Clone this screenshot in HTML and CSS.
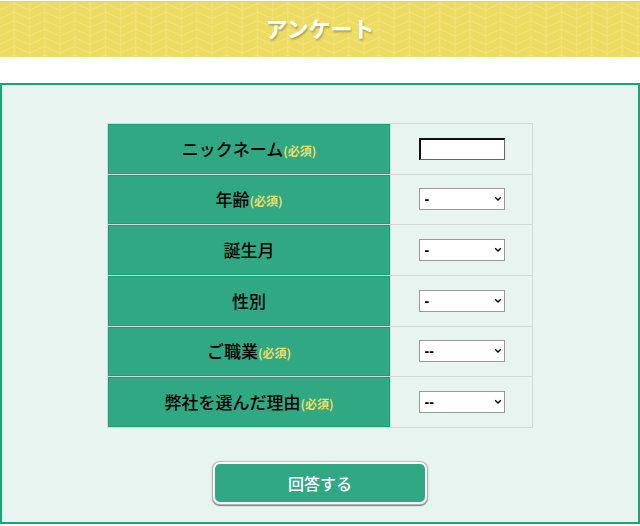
FILE: index.html
```html
<!DOCTYPE html>
<html lang="ja">
<head>
<meta charset="utf-8">
<meta name="viewport" content="width=device-width, initial-scale=1">
<title>アンケート</title>
<link rel="stylesheet" href="styles.css">
</head>
<body>
<header class="banner">
  <svg class="banner-pattern" aria-hidden="true">
    <defs>
      <path id="zigzag" d="M0 6.8 15.2 0 30.4 6.8 45.6 0 60.8 6.8 76 0 91.2 6.8 106.4 0 121.6 6.8 136.8 0 152 6.8"/>
      <pattern id="chevron" width="152" height="43" x="-1" y="1" patternUnits="userSpaceOnUse">
        <path class="upright" d="M0 0V43M15.2 0V43M30.4 0V43M45.6 0V43M60.8 0V43M76 0V43M91.2 0V43M106.4 0V43M121.6 0V43M136.8 0V43M152 0V43"/>
        <use href="#zigzag" y="-8.2"/>
        <use href="#zigzag" y="0.4"/>
        <use href="#zigzag" y="9"/>
        <use href="#zigzag" y="17.6"/>
        <use href="#zigzag" y="26.2"/>
        <use href="#zigzag" y="34.8"/>
        <use href="#zigzag" y="43.4"/>
      </pattern>
    </defs>
    <rect width="100%" height="100%" fill="url(#chevron)"/>
  </svg>
  <h1 class="banner-title">アンケート</h1>
</header>
<main class="panel">
  <form class="survey">
    <table class="fields">
      <tr>
        <th scope="row"><label for="nickname">ニックネーム<span class="required">(必須)</span></label></th>
        <td><input class="control text" id="nickname" type="text" required></td>
      </tr>
      <tr>
        <th scope="row"><label for="age">年齢<span class="required">(必須)</span></label></th>
        <td><select class="control choice" id="age"><option>-</option></select></td>
      </tr>
      <tr>
        <th scope="row"><label for="month">誕生月</label></th>
        <td><select class="control choice" id="month"><option>-</option></select></td>
      </tr>
      <tr>
        <th scope="row"><label for="gender">性別</label></th>
        <td><select class="control choice" id="gender"><option>-</option></select></td>
      </tr>
      <tr>
        <th scope="row"><label for="job">ご職業<span class="required">(必須)</span></label></th>
        <td><select class="control choice" id="job"><option>--</option></select></td>
      </tr>
      <tr>
        <th scope="row"><label for="reason">弊社を選んだ理由<span class="required">(必須)</span></label></th>
        <td><select class="control choice" id="reason"><option>--</option></select></td>
      </tr>
    </table>
    <button class="submit" type="submit">回答する</button>
  </form>
</main>
</body>
</html>
```
FILE: styles.css
```css
* {
  box-sizing: border-box;
}

body {
  margin: 0;
  background: #fff;
  color: #000;
  font-family: "Noto Sans CJK JP", sans-serif;
}

.banner {
  position: relative;
  margin-top: 1px;
  padding: 10px 12px 14px;
  background: #eddc62;
  border-top: 1px solid #e7d653;
}

.banner-pattern {
  position: absolute;
  inset: 0;
  width: 100%;
  height: 100%;
}

.banner-pattern path {
  fill: none;
  stroke: #f2e486;
  stroke-width: 1;
}

.banner-pattern .upright {
  stroke: #f0e27a;
}

.banner-title {
  position: relative;
  margin: 0;
  color: #fff;
  font-size: 22px;
  font-weight: 700;
  line-height: 31px;
  text-align: center;
  text-shadow: 1px 2px 2px #b5a648;
}

.panel {
  margin-top: 26px;
  padding: 38px 16px 18px;
  background: #e7f4f0;
  border: 2px solid #16a67a;
}

.survey {
  display: flex;
  flex-direction: column;
  align-items: center;
  gap: 34px;
}

.fields {
  width: 426px;
  max-width: 100%;
  height: 305px;
  border-collapse: collapse;
}

.fields th,
.fields td {
  padding: 12px 4px;
  border: 1px solid #d5dad8;
  text-align: center;
  vertical-align: middle;
  line-height: 22px;
}

.fields th {
  width: 66.6%;
  background: #30a884;
  box-shadow: inset 0 0 0 1px #17a178;
  font-size: 17px;
  font-weight: 500;
}

.fields .required {
  color: #eddc62;
  font-size: 12px;
  font-weight: 700;
  line-height: 12px;
}

.control {
  display: block;
  width: 86px;
  height: 22px;
  margin: 0 auto;
  padding: 0 5px;
  background-color: #fff;
  border: 1px solid #999;
  border-radius: 0;
  color: #000;
  font-family: "Liberation Sans", sans-serif;
  font-size: 14px;
  font-weight: 700;
}

.text {
  border-width: 2px 1px 1px 2px;
  border-color: #111 #666 #666 #111;
}

.choice {
  appearance: none;
  background-image: url("data:image/svg+xml,%3Csvg xmlns='http://www.w3.org/2000/svg' width='8' height='6'%3E%3Cpath d='M1.2 1.2 4 4 6.8 1.2' fill='none' stroke='%23000' stroke-width='1.4'/%3E%3C/svg%3E");
  background-position: right 2px center;
  background-repeat: no-repeat;
}

.submit {
  width: 214px;
  max-width: 100%;
  height: 42px;
  padding: 0;
  background: #30a884;
  border: 2px solid #fff;
  border-radius: 7px;
  box-shadow: 0 0 1px 1px #bbb, 0 1px 1px 1px #777;
  color: #fff;
  font-family: inherit;
  font-size: 16px;
  font-weight: 500;
  line-height: 24px;
}
```
